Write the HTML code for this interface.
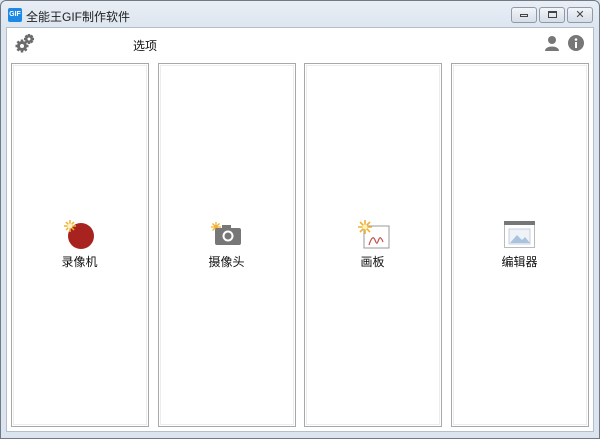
<!DOCTYPE html>
<html><head><meta charset="utf-8"><style>
body{margin:0;width:600px;height:439px;overflow:hidden;background:#dde6f0;font-family:"Liberation Sans","Noto Sans CJK SC",sans-serif;position:relative}
.frame{position:absolute;left:0;top:0;width:598px;height:437px;border:1px solid #6f7a86;border-radius:6px 6px 0 0;background:linear-gradient(#e9eef5,#dbe4ef 30px,#dbe4ef)}
.client{position:absolute;left:6px;top:27px;width:588px;height:405px;background:#fff;border:1px solid #b4bfcc;box-sizing:border-box}
.title{position:absolute;left:26px;top:8px;font-size:12px;color:#222}
.logo{position:absolute;left:8px;top:8px;width:14px;height:14px;background:#1e88e5;border-radius:2px;color:#fff;font-size:7px;font-weight:bold;line-height:14px;text-align:center}
.btn{position:absolute;top:7px;height:14px;border:1px solid #8e9aa8;border-radius:3px;background:linear-gradient(#f2f5f9,#d5dde7)}
.panel{position:absolute;top:63px;height:364px;border:1px solid #a8a8a8;box-sizing:border-box;outline:1px solid #ececec;outline-offset:-3px}
.lbl{position:absolute;top:253px;font-size:12px;color:#111;width:137px;text-align:center}
</style></head><body>
<div class="frame"></div>
<div class="logo">GIF</div>
<div class="title">全能王GIF制作软件</div>
<div class="btn" style="left:511px;width:24px"><div style="position:absolute;left:8px;top:6px;width:8px;height:3px;border:1px solid #444;box-sizing:border-box"></div></div>
<div class="btn" style="left:539px;width:24px"><div style="position:absolute;left:8px;top:3px;width:9px;height:7px;border:1px solid #444;box-sizing:border-box;border-top-width:2px"></div></div>
<div class="btn" style="left:567px;width:24px;text-align:center;font-size:11px;line-height:14px;color:#444">✕</div>
<div class="client"></div>
<svg style="position:absolute;left:14px;top:32px" width="22" height="22" viewBox="0 0 22 22">
<g fill="#6b6b6b"><circle cx="8" cy="14" r="5"/><circle cx="15" cy="7" r="4"/>
<g stroke="#6b6b6b" stroke-width="2.5"><path d="M8 7.5v13M1.5 14h13M3.4 9.4l9.2 9.2M12.6 9.4l-9.2 9.2M15 2v10M10 7h10M11.5 3.5l7 7M18.5 3.5l-7 7"/></g></g>
<circle cx="8" cy="14" r="2" fill="#fff"/><circle cx="15" cy="7" r="1.5" fill="#fff"/></svg>
<div style="position:absolute;left:133px;top:37px;font-size:12px;color:#111">选项</div>
<svg style="position:absolute;left:544px;top:35px" width="16" height="17"><circle cx="8" cy="5" r="4" fill="#777"/><path d="M1 16c0-6 14-6 14 0z" fill="#777"/></svg>
<svg style="position:absolute;left:568px;top:35px" width="16" height="16"><circle cx="8" cy="8" r="8" fill="#777"/><circle cx="8" cy="4.5" r="1.3" fill="#fff"/><rect x="7" y="7" width="2" height="6" fill="#fff"/></svg>
<div class="panel" style="left:11px;width:138px"></div>
<div class="panel" style="left:158px;width:138px"></div>
<div class="panel" style="left:304px;width:138px"></div>
<div class="panel" style="left:451px;width:138px"></div>
<svg style="position:absolute;left:62px;top:219px" width="36" height="30"><circle cx="19" cy="17" r="13" fill="#a8231f"/><g stroke="#f0b030" stroke-width="1.5"><path d="M8 1v12M2 7h12M4 3l8 8M12 3l-8 8"/></g><circle cx="8" cy="7" r="2.5" fill="#fff4c0"/></svg>
<svg style="position:absolute;left:210px;top:221px" width="34" height="26"><g stroke="#f0b030" stroke-width="1.3"><path d="M6 1v10M1 6h10M2.5 2.5l7 7M9.5 2.5l-7 7"/></g><rect x="5" y="7" width="26" height="17" rx="2" fill="#777"/><rect x="12" y="4" width="9" height="4" fill="#777"/><circle cx="18" cy="15" r="5.5" fill="#fff"/><circle cx="18" cy="15" r="3.5" fill="#777"/></svg>
<svg style="position:absolute;left:357px;top:219px" width="34" height="32"><rect x="7" y="7" width="25" height="22" fill="#fff" stroke="#999"/><path d="M12 26c2-6 4-10 6-5s2 4 4-1c1-3 3 0 4 3" stroke="#c0504d" fill="none" stroke-width="1.2"/><g stroke="#f0b030" stroke-width="1.6"><path d="M8 1v14M1 8h14M3 3l10 10M13 3l-10 10"/></g><circle cx="8" cy="8" r="2.5" fill="#fff4c0"/></svg>
<svg style="position:absolute;left:504px;top:221px" width="32" height="28"><rect x="0.5" y="0.5" width="30" height="26" fill="#fff" stroke="#bbb"/><rect x="0" y="0" width="31" height="4" fill="#777"/><rect x="5" y="8" width="21" height="15" fill="#eef3f8" stroke="#ccd"/><path d="M6 22l7-8 5 5 3-3 5 6z" fill="#a9c3dc"/></svg>
<div class="lbl" style="left:11px">录像机</div>
<div class="lbl" style="left:158px">摄像头</div>
<div class="lbl" style="left:304px">画板</div>
<div class="lbl" style="left:451px">编辑器</div>
</body></html>
